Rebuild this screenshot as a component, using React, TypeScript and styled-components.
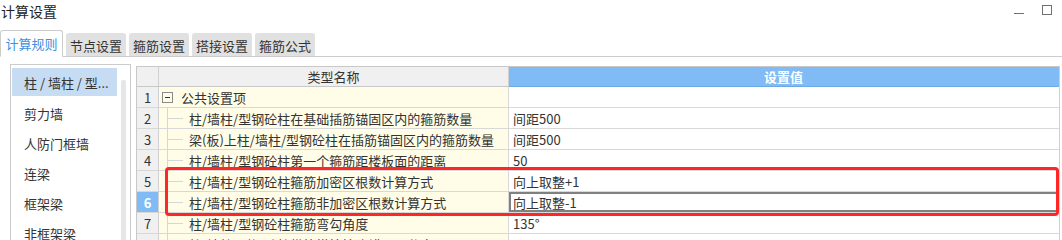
import React from "react";
import styled, { createGlobalStyle } from "styled-components";

const GlobalStyle = createGlobalStyle`
  html, body {
    margin: 0;
    padding: 0;
    background: #ffffff;
  }
  body {
    font-family: "Noto Sans CJK SC", "Microsoft YaHei", "Noto Sans", sans-serif;
    color: #333333;
  }
`;

const Window = styled.div`
  width: 1062px;
  height: 240px;
  overflow: hidden;
  background: #ffffff;
`;

const TitleBar = styled.div`
  height: 30px;
  display: flex;
  align-items: flex-start;
  justify-content: space-between;
`;

const Title = styled.div`
  font-size: 14px;
  line-height: 22px;
  padding-left: 1px;
  color: #222;
`;

const WinButtons = styled.div`
  display: flex;
  align-items: flex-start;
  gap: 18px;
  padding: 5px 10px 0 0;
`;

const MinButton = styled.span`
  display: block;
  width: 10px;
  height: 1px;
  margin-top: 8px;
  background: #707070;
`;

const MaxButton = styled.span`
  display: block;
  width: 8px;
  height: 8px;
  border: 1px solid #707070;
`;

const TabBar = styled.div`
  height: 26px;
  display: flex;
  align-items: flex-end;
  gap: 3px;
  border-bottom: 1px solid #cccccc;
`;

const Tab = styled.div<{ $active?: boolean }>`
  box-sizing: border-box;
  height: ${(p) => (p.$active ? "27px" : "23px")};
  margin-bottom: ${(p) => (p.$active ? "-1px" : "0")};
  width: ${(p) => (p.$active ? "63px" : "60px")};
  display: flex;
  align-items: center;
  justify-content: center;
  font-size: 13px;
  color: ${(p) => (p.$active ? "#3d8fe0" : "#333")};
  background: ${(p) => (p.$active ? "#ffffff" : "#e1e1e1")};
  border: 1px solid ${(p) => (p.$active ? "#cccccc" : "#e1e1e1")};
  border-bottom: ${(p) => (p.$active ? "1px solid #ffffff" : "none")};
  border-radius: 3px 3px 0 0;
`;

const Body = styled.div`
  display: flex;
  gap: 5px;
  padding: 7px 0 0 10px;
`;

const NavPanel = styled.div`
  box-sizing: border-box;
  width: 121px;
  height: 200px;
  border: 1px solid #cccccc;
  border-bottom: none;
  padding: 3px 0 0 1px;
  display: flex;
`;

const NavList = styled.div`
  width: 105px;
  display: flex;
  flex-direction: column;
`;

const NavItem = styled.div<{ $selected?: boolean }>`
  height: ${(p) => (p.$selected ? "28px" : "30px")};
  margin-bottom: ${(p) => (p.$selected ? "2px" : "0")};
  display: flex;
  align-items: center;
  padding-left: 12px;
  font-size: 13px;
  color: #333;
  white-space: nowrap;
  background: ${(p) => (p.$selected ? "#c5dcf2" : "transparent")};
`;

const ScrollTrack = styled.div`
  width: 5px;
  margin: 12px 0 0 4px;
  background: #e6e6e6;
  border-radius: 2px;
`;

const TableWrap = styled.div`
  position: relative;
  width: 924px;
  margin-top: 2px;
`;

const Grid = styled.div`
  box-sizing: border-box;
  border-top: 1px solid #c8c8c8;
  border-left: 1px solid #c8c8c8;
  border-right: 1px solid #d0d0d0;
  display: grid;
  grid-template-columns: 22px 350px 1fr;
`;

const HeadCell = styled.div<{ $accent?: boolean }>`
  height: 19px;
  display: flex;
  align-items: center;
  justify-content: center;
  font-size: 13px;
  color: ${(p) => (p.$accent ? "#ffffff" : "#333")};
  font-weight: ${(p) => (p.$accent ? 600 : 400)};
  background: ${(p) => (p.$accent ? "#80bbf6" : "#f0f0f0")};
  border-bottom: 1px solid ${(p) => (p.$accent ? "#6aa9e6" : "#c8c8c8")};
  border-right: 1px solid ${(p) => (p.$accent ? "#80bbf6" : "#d0d0d0")};
`;

const NumCell = styled.div<{ $active?: boolean }>`
  height: 20px;
  display: flex;
  align-items: center;
  justify-content: center;
  font-size: 13px;
  font-weight: ${(p) => (p.$active ? 700 : 400)};
  color: ${(p) => (p.$active ? "#ffffff" : "#333")};
  background: ${(p) => (p.$active ? "#80bbf6" : "#f0f0f0")};
  border-bottom: 1px solid #d8d8d8;
  border-right: 1px solid #d0d0d0;
`;

const NameCell = styled.div<{ $indent: number }>`
  position: relative;
  height: 20px;
  display: flex;
  align-items: center;
  padding-left: ${(p) => p.$indent}px;
  font-size: 13px;
  color: #333;
  white-space: nowrap;
  overflow: hidden;
  background: #fffde7;
  border-bottom: 1px solid #d8d8d8;
  border-right: 1px solid #d8d8d8;
`;

const ValueCell = styled.div<{ $editing?: boolean }>`
  box-sizing: border-box;
  height: 21px;
  display: flex;
  align-items: center;
  padding-left: 4px;
  font-size: 13px;
  color: #333;
  background: #ffffff;
  border-bottom: 1px solid #d8d8d8;
  box-shadow: ${(p) => (p.$editing ? "inset 0 0 0 2px #808080" : "none")};
`;

const TreeLine = styled.span`
  position: absolute;
  left: 8px;
  top: 0;
  bottom: -1px;
  border-left: 1px solid #d6d6d6;
  &::after {
    content: "";
    position: absolute;
    left: 0;
    top: 10px;
    width: 15px;
    border-top: 1px solid #d6d6d6;
  }
`;

const Toggle = styled.span`
  box-sizing: border-box;
  width: 11px;
  height: 11px;
  border: 1px solid #8a8a8a;
  margin-right: 8px;
  display: flex;
  align-items: center;
  justify-content: center;
  &::before {
    content: "";
    width: 5px;
    border-top: 1px solid #333;
  }
`;

const Highlight = styled.div`
  position: absolute;
  left: 29px;
  top: 101px;
  width: 894px;
  height: 49px;
  box-sizing: border-box;
  border: 3px solid #ff2626;
  border-radius: 4px;
  pointer-events: none;
`;

type Row = { name: string; value: string; group?: boolean };

const rows: Row[] = [
  { name: "公共设置项", value: "", group: true },
  { name: "柱/墙柱/型钢砼柱在基础插筋锚固区内的箍筋数量", value: "间距500" },
  { name: "梁(板)上柱/墙柱/型钢砼柱在插筋锚固区内的箍筋数量", value: "间距500" },
  { name: "柱/墙柱/型钢砼柱第一个箍筋距楼板面的距离", value: "50" },
  { name: "柱/墙柱/型钢砼柱箍筋加密区根数计算方式", value: "向上取整+1" },
  { name: "柱/墙柱/型钢砼柱箍筋非加密区根数计算方式", value: "向上取整-1" },
  { name: "柱/墙柱/型钢砼柱箍筋弯勾角度", value: "135°" },
  { name: "柱/墙柱/型钢砼柱纵筋搭接接头错开百分率", value: "50%" },
];

const navItems = ["柱 / 墙柱 / 型...", "剪力墙", "人防门框墙", "连梁", "框架梁", "非框架梁"];
const tabs = ["计算规则", "节点设置", "箍筋设置", "搭接设置", "箍筋公式"];

const App = () => {
  const activeRow = 6;
  return (
    <Window>
      <GlobalStyle />
      <TitleBar>
        <Title>计算设置</Title>
        <WinButtons>
          <MinButton />
          <MaxButton />
        </WinButtons>
      </TitleBar>
      <TabBar>
        {tabs.map((t, i) => (
          <Tab key={t} $active={i === 0}>
            {t}
          </Tab>
        ))}
      </TabBar>
      <Body>
        <NavPanel>
          <NavList>
            {navItems.map((n, i) => (
              <NavItem key={n} $selected={i === 0}>
                {n}
              </NavItem>
            ))}
          </NavList>
          <ScrollTrack />
        </NavPanel>
        <TableWrap>
          <Grid>
            <HeadCell />
            <HeadCell>类型名称</HeadCell>
            <HeadCell $accent>设置值</HeadCell>
            {rows.map((r, i) => (
              <React.Fragment key={i}>
                <NumCell $active={i + 1 === activeRow}>{i + 1}</NumCell>
                <NameCell $indent={r.group ? 3 : 30}>
                  {r.group ? <Toggle /> : <TreeLine />}
                  {r.name}
                </NameCell>
                <ValueCell $editing={i + 1 === activeRow}>{r.value}</ValueCell>
              </React.Fragment>
            ))}
          </Grid>
          <Highlight />
        </TableWrap>
      </Body>
    </Window>
  );
};

export default App;
